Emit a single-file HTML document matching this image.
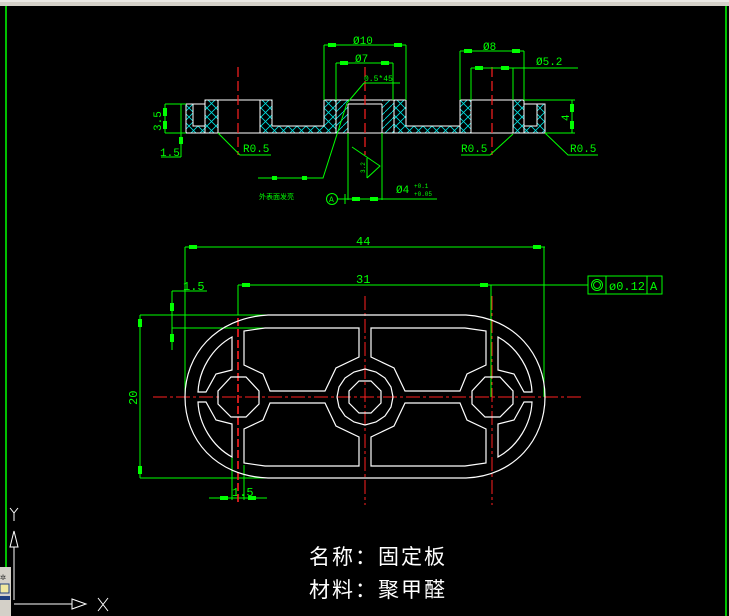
<!DOCTYPE html>
<html><head><meta charset="utf-8"><style>
html,body{margin:0;padding:0;background:#000;width:729px;height:616px;overflow:hidden}
svg{display:block}
text{font-family:"Liberation Mono","Noto Sans CJK SC",monospace}
</style></head><body>
<svg width="729" height="616" viewBox="0 0 729 616" xmlns="http://www.w3.org/2000/svg">
<defs>
<pattern id="xh" width="9" height="9" patternUnits="userSpaceOnUse">
<path d="M0 0L9 9M9 0L0 9" stroke="#00e0e0" stroke-width="0.8"/>
</pattern>
<pattern id="dh" width="7" height="7" patternUnits="userSpaceOnUse">
<path d="M0 7L7 0" stroke="#00e0e0" stroke-width="0.8"/>
</pattern>
</defs>
<rect width="729" height="616" fill="#000"/>
<rect x="0" y="0" width="729" height="6" fill="#d4d0c8"/>
<line x1="0" y1="1" x2="729" y2="1" fill="none" stroke="#fff" stroke-width="1"/>
<line x1="6" y1="6" x2="6" y2="567" stroke="#00ff00" stroke-width="1.5"/>
<line x1="726" y1="6" x2="726" y2="616" stroke="#00ff00" stroke-width="1.5"/>

<!-- ===== SECTION VIEW ===== -->
<g stroke="none">
<rect x="186" y="104" width="7" height="29" fill="url(#xh)"/>
<rect x="193" y="126" width="12" height="7" fill="url(#xh)"/>
<rect x="205" y="100" width="13" height="33" fill="url(#xh)"/>
<rect x="260" y="100" width="12" height="33" fill="url(#xh)"/>
<rect x="272" y="126" width="52" height="7" fill="url(#xh)"/>
<rect x="324" y="100" width="12" height="33" fill="url(#xh)"/>
<rect x="336" y="100" width="12" height="33" fill="url(#dh)"/>
<rect x="382" y="100" width="12" height="33" fill="url(#dh)"/>
<rect x="394" y="100" width="12" height="33" fill="url(#xh)"/>
<rect x="406" y="126" width="54" height="7" fill="url(#xh)"/>
<rect x="460" y="100" width="11" height="33" fill="url(#xh)"/>
<rect x="513" y="100" width="11" height="33" fill="url(#xh)"/>
<rect x="524" y="126" width="13" height="7" fill="url(#xh)"/>
<rect x="537" y="104" width="8" height="29" fill="url(#xh)"/>
</g>
<g fill="none" stroke="#fff" stroke-width="1">
<path d="M186 104H205V100H272V126H324V100H406V126H460V100H524V104H545V133H186Z"/>
<path d="M193 104V126H205"/><path d="M537 104V126H524"/>
<path d="M205 104V133M218 100V133M260 100V133M272 100V126"/>
<path d="M348 104V133M382 104V133M348 104H382M336 100V133M394 100V133"/>
<path d="M471 100V133M513 100V133M460 126V133M524 104V133"/>
</g>
<g stroke="#ff2020" stroke-width="1.2" stroke-dasharray="10 4">
<line x1="238" y1="67" x2="238" y2="155"/>
<line x1="365" y1="67" x2="365" y2="155"/>
<line x1="492" y1="67" x2="492" y2="155"/>
</g>
<g fill="none" stroke="#00ff00" stroke-width="1">
<path d="M324 45H406M324 45V100M406 45V100"/>
<path d="M336 63H393M336 63V100M393 63V100"/>
<path d="M364 83H400M364 83L347 103"/>
<path d="M460 51H524M460 51V100M524 51V100"/>
<path d="M471 68H578M471 68V100M513 68V100"/>
<path d="M524 100H575M545 133H575M572 100V133"/>
<path d="M165 104H186M165 133H186M165 104V133M181 104V157M161 157H181"/>
<path d="M218 133L240 155H271"/>
<path d="M461 155H490L513 134"/>
<path d="M545 133L568 155H598"/>
<path d="M258 178H323L347 103"/>
<path d="M352 147L380 166L367 178M367 158V178"/>
<path d="M348 133V200M382 133V200M338 199H437"/>
<path d="M345 194V204"/>
<circle cx="332" cy="199" r="5.5"/>
</g>
<g fill="#00ff00">
<rect x="328" y="43" width="8" height="4"/><rect x="394" y="43" width="8" height="4"/>
<rect x="340" y="61" width="8" height="4"/><rect x="381" y="61" width="8" height="4"/>
<rect x="464" y="49" width="8" height="4"/><rect x="512" y="49" width="8" height="4"/>
<rect x="475" y="66" width="8" height="4"/><rect x="501" y="66" width="8" height="4"/>
<rect x="570" y="104" width="4" height="8" /><rect x="570" y="121" width="4" height="8"/>
<rect x="163" y="108" width="4" height="8"/><rect x="163" y="121" width="4" height="8"/>
<rect x="179" y="137" width="4" height="7"/>
<rect x="272" y="176" width="5" height="4"/><rect x="302" y="176" width="5" height="4"/>
<rect x="352" y="197" width="8" height="4"/><rect x="370" y="197" width="8" height="4"/>
</g>
<g fill="#00ff00" font-size="11">
<text x="353" y="44">Ø10</text>
<text x="355" y="62">Ø7</text>
<text x="364" y="81" font-size="8">0.5*45</text>
<text x="483" y="50">Ø8</text>
<text x="536" y="65">Ø5.2</text>
<text x="243" y="152">R0.5</text>
<text x="461" y="152">R0.5</text>
<text x="570" y="152">R0.5</text>
<text x="160" y="156">1.5</text>
<text x="396" y="193">Ø4</text>
<text x="414" y="188" font-size="6">+0.1</text>
<text x="414" y="196" font-size="6">+0.05</text>
<text x="329" y="202" font-size="8">A</text>
<text x="259" y="199" font-size="7" font-family="'Noto Sans CJK SC',sans-serif">外表面发亮</text>
<text transform="translate(161,131) rotate(-90)" font-size="11">3.5</text>
<text transform="translate(569,121) rotate(-90)" font-size="11">4</text>
<text transform="translate(365,173) rotate(-90)" font-size="6">3.2</text>
</g>

<!-- ===== PLAN VIEW ===== -->
<g fill="none" stroke="#00ff00" stroke-width="1">
<path d="M185 247H545M185 247V397M544 247V397"/>
<path d="M238 285H588M238 285V315M491 285V397"/>
<rect x="588" y="276" width="74" height="18"/>
<path d="M606 276V294M647 276V294"/>
<circle cx="597" cy="285" r="5.5"/><circle cx="597" cy="285" r="3.5"/>
<path d="M172 291H207M172 291V350M140 315H268M172 328H268"/>
<path d="M140 315V478M140 478H268"/>
<path d="M209 498H267M232 440V500M244 465V500"/>
</g>
<g fill="#00ff00">
<rect x="189" y="245" width="8" height="4"/><rect x="533" y="245" width="8" height="4"/>
<rect x="242" y="283" width="8" height="4"/><rect x="480" y="283" width="8" height="4"/>
<rect x="170" y="303" width="4" height="8"/><rect x="170" y="334" width="4" height="8"/>
<rect x="138" y="319" width="4" height="8"/><rect x="138" y="466" width="4" height="8"/>
<rect x="220" y="496" width="8" height="4"/><rect x="248" y="496" width="8" height="4"/>
</g>
<g fill="#00ff00" font-size="12">
<text x="356" y="245">44</text>
<text x="356" y="283">31</text>
<text x="183" y="290">1.5</text>
<text x="232" y="496">1.5</text>
<text x="609" y="290">ø0.12</text>
<text x="650" y="290">A</text>
<text transform="translate(137,405) rotate(-90)">20</text>
</g>

<g stroke="#ff2020" stroke-width="1" fill="none">
<line x1="153" y1="397" x2="581" y2="397" stroke-dasharray="14 3 3 3"/>
<line x1="365" y1="296" x2="365" y2="505" stroke-dasharray="14 3 3 3"/>
<line x1="492" y1="296" x2="492" y2="505" stroke-dasharray="14 3 3 3"/>
<line x1="238" y1="318" x2="238" y2="505" stroke-width="1.6" stroke-dasharray="8 3"/>
</g>

<g fill="none" stroke="#fff" stroke-width="1.2">
<path d="M268 315H466C515 318 545 355 545 397C545 439 515 476 466 478H268C215 476 185 439 185 397C185 355 215 318 268 315Z"/>
<g id="pk">
<path d="M265 328H359V357L336 368L325 391H270L263 374L244 365V331Z"/>
<path d="M232 337V370L216 374L206 392H198C199 370 212 348 232 337Z"/>
</g>
<use href="#pk" transform="translate(730,0) scale(-1,1)"/>
<use href="#pk" transform="translate(0,794) scale(1,-1)"/>
<use href="#pk" transform="translate(730,794) scale(-1,-1)"/>
<polygon points="231,377 246,377 259,391 259,404 246,417 231,417 218,404 218,391"/>
<polygon points="485,377 500,377 513,391 513,404 500,417 485,417 472,404 472,391"/>
<polygon points="359,381 371,381 381,391 381,403 371,413 359,413 349,403 349,391"/>
<polygon points="365,369 376,372 385,378 391,387 393,397 391,407 385,416 376,422 365,425 354,422 345,416 339,407 337,397 339,387 345,378 354,372"/>
</g>

<!-- bottom text -->
<g fill="#fff" font-family="'Liberation Sans','Noto Sans CJK SC',sans-serif" font-size="21" letter-spacing="2">
<text x="309" y="564">名称：固定板</text>
<text x="309" y="597">材料：聚甲醛</text>
</g>

<!-- UCS -->
<g fill="none" stroke="#fff" stroke-width="1">
<path d="M10 508L14 513L18 508M14 513V521"/>
<path d="M14 600V547M10 547L14 531L18 547Z"/>
<path d="M14 604H72M72 599L86 604L72 609Z"/>
<path d="M98 598L108 611M108 598L98 611"/>
</g>
<rect x="0" y="567" width="11" height="49" fill="#d4d0c8"/>
<rect x="0" y="584" width="9" height="9" fill="#f0e8a0" stroke="#204080" stroke-width="1"/>
<rect x="0" y="596" width="10" height="4" fill="#204080"/>
<text x="0" y="580" font-size="10" fill="#303030">✲</text>
</svg>
</body></html>
